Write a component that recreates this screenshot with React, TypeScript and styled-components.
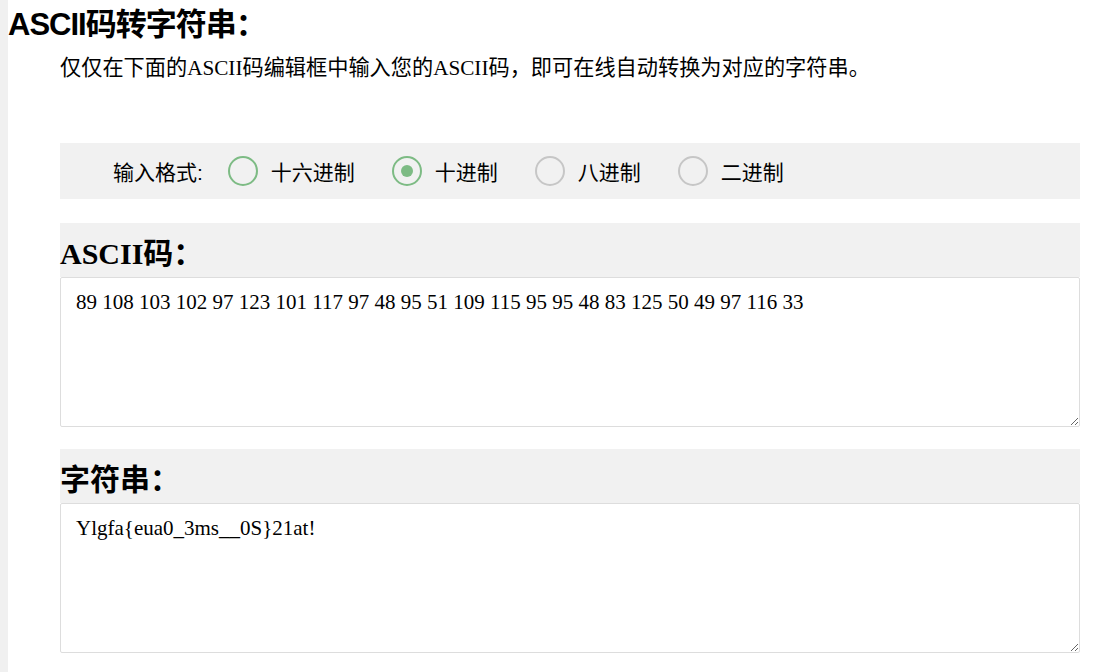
import React, { useEffect, useRef, useState } from 'react';
import styled, { createGlobalStyle } from 'styled-components';

const GlobalStyle = createGlobalStyle`
    html, body {
        margin: 0;
        padding: 0;
        background: #fff;
    }
    body {
        border-left: 8px solid #f0f0f0;
        min-height: 100vh;
        box-sizing: border-box;
        font-family: "Liberation Serif", "Noto Sans CJK SC", serif;
        color: #000;
    }
`

const formats = ['十六进制', '十进制', '八进制', '二进制'];
const asciiText = '89 108 103 102 97 123 101 117 97 48 95 51 109 115 95 95 48 83 125 50 49 97 116 33';
const resultText = 'Ylgfa{eua0_3ms__0S}21at!';

function App() {
    const [format, setFormat] = useState(1);
    const resultRef = useRef<HTMLTextAreaElement>(null);

    useEffect(() => {
        const el = resultRef.current;
        if (el) {
            el.focus();
            el.setSelectionRange(el.value.length, el.value.length);
        }
    }, []);

    return (
        <Page>
            <GlobalStyle/>
            <Title>ASCII码转字符串：</Title>
            <Content>
                <Intro>仅仅在下面的ASCII码编辑框中输入您的ASCII码，即可在线自动转换为对应的字符串。</Intro>

                <FormatBar>
                    <FormatLabel>输入格式:</FormatLabel>
                    {formats.map((name, i) => (
                        <RadioItem key={name} onClick={() => setFormat(i)}>
                            <RadioCircle $active={i < 2} $checked={format === i}/>
                            <span>{name}</span>
                        </RadioItem>
                    ))}
                </FormatBar>

                <SectionHead>ASCII码：</SectionHead>
                <TextBox defaultValue={asciiText} spellCheck={false}/>

                <SectionHead $sans $gap={22}>字符串：</SectionHead>
                <TextBox ref={resultRef} defaultValue={resultText}/>
            </Content>
        </Page>
    );
}

const Page = styled.div`
    padding-bottom: 20px;
`

const Title = styled.h1`
    margin: 0;
    padding: 6px 0 0 0;
    font-family: "Liberation Sans", "Noto Sans CJK SC", sans-serif;
    font-size: 31px;
    font-weight: 700;
    line-height: 38px;
    letter-spacing: -1px;
`

const Content = styled.div`
    width: 1020px;
    margin-left: 52px;
    display: flex;
    flex-direction: column;
`

const Intro = styled.p`
    margin: 10px 0 0 0;
    font-size: 21.2px;
    line-height: 28px;
`

const FormatBar = styled.div`
    display: flex;
    align-items: center;
    height: 56px;
    margin-top: 61px;
    padding-left: 53px;
    background: #f1f1f1;
    font-family: "Liberation Sans", "Noto Sans CJK SC", sans-serif;
    font-size: 21px;
`

const FormatLabel = styled.span`
    margin-right: 25px;
`

const RadioItem = styled.label`
    display: flex;
    align-items: center;
    gap: 13px;
    margin-right: 37px;
    cursor: pointer;
`

const RadioCircle = styled.span<{ $active: boolean; $checked: boolean }>`
    position: relative;
    width: 30px;
    height: 30px;
    box-sizing: border-box;
    border-radius: 50%;
    border: 2px solid ${p => (p.$active ? '#7dbb84' : '#c6c6c6')};
    background: #f1f1f1;

    &::after {
        content: '';
        display: ${p => (p.$checked ? 'block' : 'none')};
        position: absolute;
        left: 7px;
        top: 7px;
        width: 12px;
        height: 12px;
        border-radius: 50%;
        background: #7dbb84;
    }
`

const SectionHead = styled.h2<{ $sans?: boolean; $gap?: number }>`
    margin: ${p => p.$gap ?? 24}px 0 0 0;
    height: 54px;
    display: flex;
    align-items: center;
    padding-top: 1px;
    box-sizing: border-box;
    background: #f1f1f1;
    font-family: ${p => (p.$sans
        ? '"Liberation Sans", "Noto Sans CJK SC", sans-serif'
        : '"Liberation Serif", "Noto Sans CJK SC", serif')};
    font-size: 30px;
    font-weight: 700;
`

const TextBox = styled.textarea`
    display: block;
    width: 1020px;
    height: 150px;
    box-sizing: border-box;
    margin: 0;
    padding: 11px 15px;
    border: 1px solid #dddddd;
    border-radius: 2px;
    background: #fff;
    font-family: "Liberation Serif", "Noto Sans CJK SC", serif;
    font-size: 21px;
    line-height: 26px;
    color: #000;
    outline: none;
    resize: vertical;
`

export default App;
